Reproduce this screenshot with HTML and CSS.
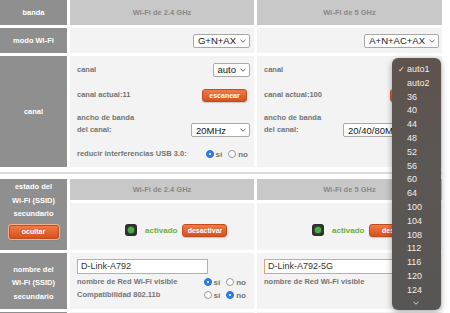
FILE: index.html
```html
<!DOCTYPE html>
<html lang="es">
<head>
<meta charset="utf-8">
<title>Wi-Fi</title>
<link rel="stylesheet" href="styles.css">
</head>
<body>
<div class="page">
  <div class="grid g1">
    <div class="lab">banda</div>
    <div class="head">Wi-Fi de 2.4 GHz</div>
    <div class="head">Wi-Fi de 5 GHz</div>

    <div class="lab">modo Wi-Fi</div>
    <div class="cell end"><span class="sel">G+N+AX<svg class="chev" viewBox="0 0 6 4"><polyline points="0.5,0.8 3,3.2 5.5,0.8"/></svg></span></div>
    <div class="cell end pr3"><span class="sel">A+N+AC+AX<svg class="chev" viewBox="0 0 6 4"><polyline points="0.5,0.8 3,3.2 5.5,0.8"/></svg></span></div>

    <div class="lab">canal</div>
    <div class="cell stack">
      <div class="sub sa"><span class="txt">canal</span><span class="sel">auto<svg class="chev" viewBox="0 0 6 4"><polyline points="0.5,0.8 3,3.2 5.5,0.8"/></svg></span></div>
      <div class="sub sb"><span class="txt">canal actual:11</span><span class="btn scan">escanear</span></div>
      <div class="sub sc"><span class="txt">ancho de banda<br>del canal:</span><span class="sel wide sel-low">20MHz<svg class="chev" viewBox="0 0 6 4"><polyline points="0.5,0.8 3,3.2 5.5,0.8"/></svg></span></div>
      <div class="sub sd"><span class="txt">reducir interferencias USB 3.0:</span>
        <span class="radios"><span class="radio on"></span><span class="rt">sí</span><span class="radio"></span><span class="rt">no</span></span></div>
    </div>
    <div class="cell stack">
      <div class="sub sa"><span class="txt">canal</span></div>
      <div class="sub sb"><span class="txt">canal actual:100</span><span class="btn scan">escanear</span></div>
      <div class="sub sc"><span class="txt">ancho de banda<br>del canal:</span><span class="sel wider sel-low">20/40/80MHz<svg class="chev" viewBox="0 0 6 4"><polyline points="0.5,0.8 3,3.2 5.5,0.8"/></svg></span></div>
    </div>
  </div>

  <div class="sep"></div>

  <div class="grid g2">
    <div class="lab top">estado del<br>Wi-Fi (SSID)<br>secundario<span class="btn hide">ocultar</span></div>
    <div class="col">
      <div class="head h21">Wi-Fi de 2.4 GHz</div>
      <div class="cell state"><span class="led"><span class="dot"></span></span><span class="ok">activado</span><span class="btn off">desactivar</span></div>
    </div>
    <div class="col">
      <div class="head h21">Wi-Fi de 5 GHz</div>
      <div class="cell state"><span class="led"><span class="dot"></span></span><span class="ok">activado</span><span class="btn off">desac</span></div>
    </div>

    <div class="lab low">nombre del<br>Wi-Fi (SSID)<br>secundario</div>
    <div class="cell ssid">
      <div class="inp">D-Link-A792</div>
      <div class="line"><span class="txt">nombre de Red Wi-Fi visible</span>
        <span class="radios"><span class="radio on"></span><span class="rt">sí</span><span class="radio"></span><span class="rt">no</span></span></div>
      <div class="line"><span class="txt">Compatibilidad 802.11b</span>
        <span class="radios"><span class="radio"></span><span class="rt">sí</span><span class="radio on"></span><span class="rt">no</span></span></div>
    </div>
    <div class="cell ssid">
      <div class="inp">D-Link-A792-5G</div>
      <div class="line"><span class="txt">nombre de Red Wi-Fi visible</span></div>
    </div>

    <div class="lab"></div>
    <div class="cell"></div>
    <div class="cell"></div>
  </div>
</div>

<div class="menu">
  <div class="item chk">auto1</div>
  <div class="item">auto2</div>
  <div class="item">36</div>
  <div class="item">40</div>
  <div class="item">44</div>
  <div class="item">48</div>
  <div class="item">52</div>
  <div class="item">56</div>
  <div class="item">60</div>
  <div class="item">64</div>
  <div class="item">100</div>
  <div class="item">104</div>
  <div class="item">108</div>
  <div class="item">112</div>
  <div class="item">116</div>
  <div class="item">120</div>
  <div class="item">124</div>
  <div class="more"><svg class="mchev" viewBox="0 0 6 4"><polyline points="0.5,0.8 3,3.2 5.5,0.8"/></svg></div>
</div>
</body>
</html>
```

FILE: styles.css
```css
* { box-sizing: border-box; margin: 0; padding: 0; }
html, body { background: #fff; }
body {
  width: 450px;
  height: 313px;
  overflow: hidden;
  position: relative;
  font-family: "Liberation Sans", Arial, sans-serif;
}
.page { width: 442px; }
.grid {
  display: grid;
  grid-template-columns: 67px 184px 185px;
  column-gap: 3px;
  row-gap: 3px;
}
.g1 { grid-template-rows: 25px 25px 111px; }
.g2 { grid-template-rows: 71px 56px 30px; }

.sep { height: 12px; display: flex; align-items: center; }
.sep::before { content: ""; display: block; width: 100%; height: 2px; background: #dcdcdc; }

.lab {
  background: #8f8f8f;
  color: #fff;
  font-weight: bold;
  font-size: 7.5px;
  line-height: 13.5px;
  display: flex;
  flex-direction: column;
  align-items: center;
  justify-content: center;
  text-align: center;
}
.lab.top { justify-content: flex-start; padding-top: 1px; }
.lab.low { padding-top: 4px; }

.head {
  background: #c8c8c8;
  color: #898989;
  font-weight: bold;
  font-size: 7.5px;
  display: flex;
  align-items: center;
  justify-content: center;
}
.h21 { height: 21px; flex: none; }
.col { display: flex; flex-direction: column; gap: 3px; }

.cell { background: #f3f3f3; }
.end { display: flex; align-items: center; justify-content: flex-end; padding-right: 4px; }
.pr3 { padding-right: 3px; }

.txt {
  color: #737373;
  font-weight: bold;
  font-size: 7.5px;
  line-height: 12px;
}

.stack { display: flex; flex-direction: column; padding: 0 4px 0 7px; }
.sub { display: flex; align-items: center; justify-content: space-between; }
.sa { height: 27px; }
.sb { height: 24px; }
.sc { height: 34px; }
.sd { height: 26px; }
.sel-low { align-self: flex-end; margin-bottom: 4px; }

.sel {
  display: inline-flex;
  align-items: center;
  justify-content: space-between;
  height: 14px;
  background: #fff;
  border: 1px solid #a8a8a8;
  border-radius: 2px;
  font-size: 9.5px;
  color: #151515;
  padding: 0 3px 0 4px;
  gap: 4px;
}
.sel.wide { width: 59px; }
.sel.wider { width: 95px; }
.chev { width: 6px; height: 4px; fill: none; stroke: #555; stroke-width: 0.9; }

.btn {
  display: inline-flex;
  align-items: center;
  justify-content: center;
  height: 13px;
  border-radius: 3px;
  background: linear-gradient(#f07a45, #d6521e);
  border: 1px solid #c44b1b;
  color: #fff;
  font-weight: bold;
  font-size: 7px;
  box-shadow: 0 1px 1px rgba(0,0,0,.18);
  overflow: hidden;
}
.scan { width: 45px; margin-right: 3px; }
.off { width: 45px; margin-left: 5px; }
.hide { width: 50px; height: 14px; margin-top: 4px; box-shadow: 0 0 0 1px #f3b08f, 0 1px 2px rgba(0,0,0,.2); }

.radios { display: inline-flex; align-items: center; margin-right: 2px; }
.radio {
  width: 8px; height: 8px;
  border-radius: 50%;
  background: #fff;
  border: 1px solid #9a9a9a;
  margin-right: 2px;
  position: relative;
}
.radio.on { background: #2f7ef0; border-color: #2a6fd6; }
.radio.on::after {
  content: ""; position: absolute; left: 2px; top: 2px;
  width: 2px; height: 2px; border-radius: 50%; background: #fff;
}
.rt { color: #737373; font-weight: bold; font-size: 8px; margin-right: 6px; }
.rt:last-child { margin-right: 0; }

.state { flex: 1; display: flex; align-items: center; padding-left: 55px; padding-top: 7px; }
.led {
  width: 12px; height: 12px;
  border-radius: 3px;
  background: #2d2d2d;
  display: flex; align-items: center; justify-content: center;
  margin-right: 8px;
}
.dot { width: 6px; height: 6px; border-radius: 50%; background: #45b042; box-shadow: 0 0 2px #6fdc5c; }
.ok { color: #6aae44; font-weight: bold; font-size: 8px; }

.ssid { padding: 6px 6px 0 7px; display: flex; flex-direction: column; }
.inp {
  width: 131px; height: 15px;
  background: #fff;
  border: 1px solid #e3a27c;
  font-size: 9px;
  color: #333;
  padding-left: 3px;
  line-height: 13px;
  flex: none;
}
.line { display: flex; align-items: center; justify-content: space-between; height: 13px; }
.inp + .line { margin-top: 1.5px; }

.menu {
  position: absolute;
  left: 392px;
  top: 58px;
  width: 49px;
  height: 252px;
  border-radius: 6px;
  background: linear-gradient(#5f534d, #5a5754 40%, #585654);
  box-shadow: 0 2px 6px rgba(0,0,0,.35);
  padding-top: 5px;
}
.item {
  height: 13.8px;
  line-height: 13.8px;
  padding-left: 15px;
  color: #f1ede9;
  font-size: 9px;
  position: relative;
}
.chk::before {
  content: "✓";
  position: absolute;
  left: 6px;
  top: 0;
  font-family: "DejaVu Sans", sans-serif;
  font-size: 8px;
}
.more { display: flex; justify-content: center; padding-top: 3px; padding-right: 1px; }
.mchev { width: 6px; height: 4px; fill: none; stroke: #e8e4e0; stroke-width: 0.9; }
```
